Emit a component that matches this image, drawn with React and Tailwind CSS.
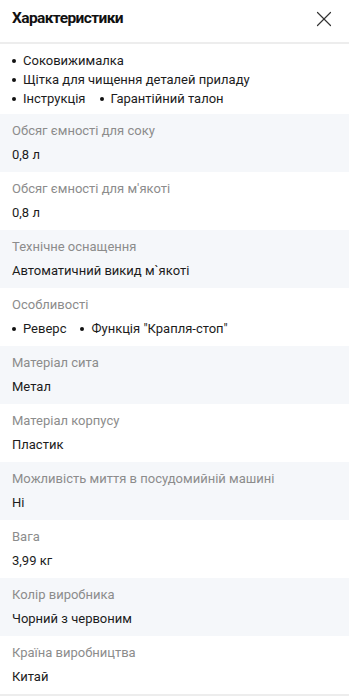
import { X } from 'lucide-react';

const SPECS = [
  { label: 'Обсяг ємності для соку', value: '0,8 л' },
  { label: "Обсяг ємності для м'якоті", value: '0,8 л' },
  { label: 'Технічне оснащення', value: 'Автоматичний викид м`якоті' },
  { label: 'Особливості', list: ['Реверс', 'Функція "Крапля-стоп"'] },
  { label: 'Матеріал сита', value: 'Метал' },
  { label: 'Матеріал корпусу', value: 'Пластик' },
  { label: 'Можливість миття в посудомийній машині', value: 'Ні' },
  { label: 'Вага', value: '3,99 кг' },
  { label: 'Колір виробника', value: 'Чорний з червоним' },
  { label: 'Країна виробництва', value: 'Китай' },
];

function Bullet({ children }) {
  return (
    <span className="flex items-center gap-[7px]">
      <span className="w-[4px] h-[4px] rounded-full bg-[#111] flex-shrink-0" />
      <span>{children}</span>
    </span>
  );
}

export default function App() {
  return (
    <div className="w-[349px] min-h-[699px] bg-white text-[#222]" style={{ fontFamily: 'Roboto, "Noto Sans", sans-serif' }}>
      {/* Header */}
      <div className="h-[44px] flex items-center justify-between pl-[12px] pr-[12px] pb-[4px] border-b-2 border-[#ededed]">
        <h2 className="text-[15.5px] font-bold text-[#111] tracking-[-0.6px]">Характеристики</h2>
        <X className="w-[26px] h-[26px] text-[#333]" strokeWidth={1.1} />
      </div>

      {/* Set contents */}
      <div className="px-[12px] pt-[7px] pb-[6px] text-[13px] leading-[19px] text-[#1c1c1c]">
        <div className="flex"><Bullet>Соковижималка</Bullet></div>
        <div className="flex"><Bullet>Щітка для чищення деталей приладу</Bullet></div>
        <div className="flex gap-[14px]"><Bullet>Інструкція</Bullet><Bullet>Гарантійний талон</Bullet></div>
      </div>

      {/* Spec rows */}
      <div className="border-b-2 border-[#ededed]">
        {SPECS.map((s, i) => (
          <div key={s.label} className={`h-[58px] px-[12px] pt-[8px] ${i % 2 === 0 ? 'bg-[#f5f7fa]' : 'bg-white'}`}>
            <p className="text-[13px] leading-[17px] text-[#8c8c8c]">{s.label}</p>
            <div className="mt-[6px] text-[13px] leading-[19px] text-[#1c1c1c]">
              {s.list ? (
                <div className="flex gap-[14px]">
                  {s.list.map((item) => <Bullet key={item}>{item}</Bullet>)}
                </div>
              ) : s.value}
            </div>
          </div>
        ))}
      </div>
    </div>
  );
}
